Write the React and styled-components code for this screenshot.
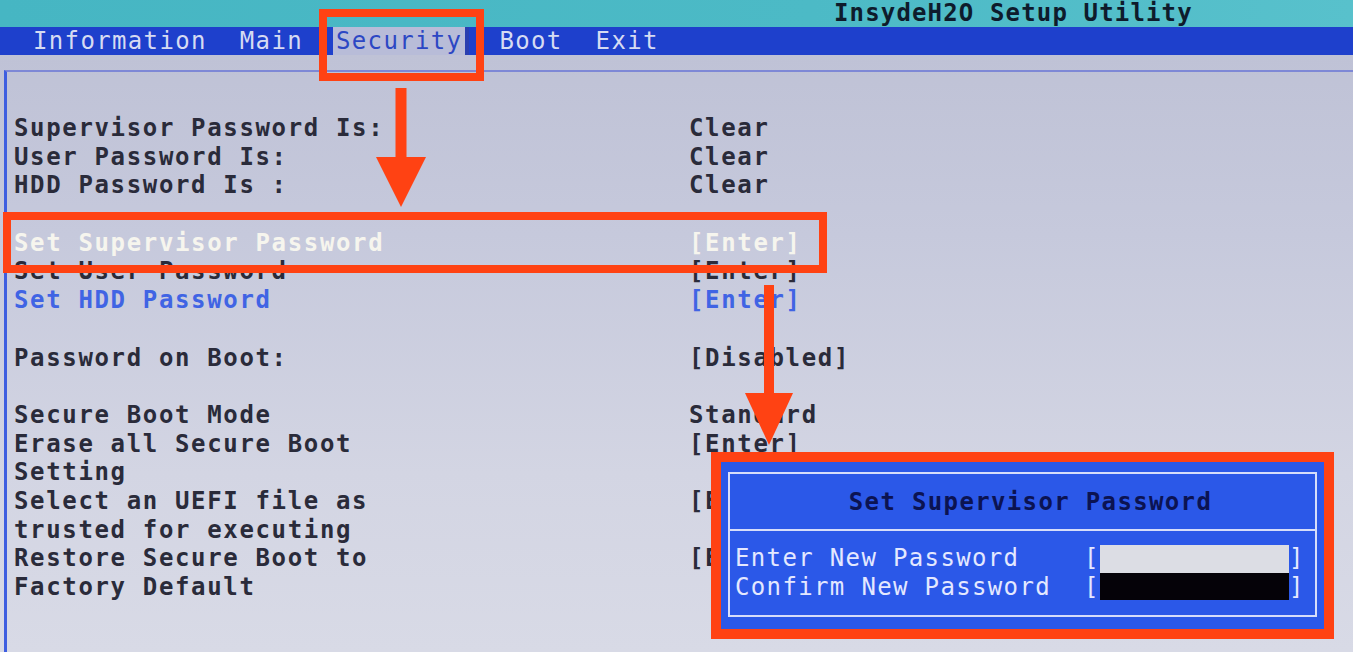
import React from "react";
import styled, { createGlobalStyle } from "styled-components";

const Global = createGlobalStyle`
  html, body { margin: 0; padding: 0; background: #cfd2e2; overflow: hidden; }
  #root { width: 1353px; height: 652px; }
`;

const MONO = `"DejaVu Sans Mono", "Liberation Mono", monospace`;

const Screen = styled.div`
  position: relative;
  width: 1353px;
  height: 652px;
  overflow: hidden;
  display: flex;
  flex-direction: column;
  font-family: ${MONO};
  font-size: 24px;
`;

const TitleBar = styled.header`
  height: 27px;
  flex: none;
  display: flex;
  align-items: center;
  padding-left: 834px;
  background: linear-gradient(90deg, #46b6c3 0%, #4cbac6 60%, #58c1cc 100%);
`;

const Title = styled.h1`
  margin: 0;
  font-size: 24px;
  font-weight: 700;
  letter-spacing: 1.15px;
  color: #0e1b2c;
  line-height: 27px;
`;

const MenuBar = styled.nav`
  height: 28px;
  flex: none;
  display: flex;
  align-items: stretch;
  gap: 27px;
  padding-left: 30px;
  background: #1e40cc;
`;

const Tab = styled.span`
  display: flex;
  align-items: center;
  padding: 0 3px;
  letter-spacing: 1.35px;
  color: ${(p) => (p.$active ? "#2c47c4" : "#d6dbf2")};
  background: ${(p) => (p.$active ? "#b8bcd8" : "transparent")};
  border-right: ${(p) => (p.$active ? "4px solid #2a3fb0" : "none")};
`;

const Body = styled.main`
  flex: 1;
  display: flex;
  flex-direction: column;
  padding-top: 15px;
  background: linear-gradient(180deg, #bfc2d6 0%, #c6c9dc 30%, #d3d5e3 70%, #d8dae6 100%);
`;

const Panel = styled.section`
  flex: 1;
  margin-left: 4px;
  border-top: 2px solid #7e88d6;
  border-left: 3px solid #3e5ee0;
  padding: 42px 0 0 7px;
  display: flex;
  flex-direction: column;
`;

const Row = styled.div`
  display: grid;
  grid-template-columns: 675px 1fr;
  line-height: 28.69px;
  font-weight: 700;
  letter-spacing: 1.65px;
  white-space: pre;
  color: ${(p) =>
    p.$tone === "selected" ? "#f6f5ee" : p.$tone === "link" ? "#4064e4" : "#2a2b3a"};
`;

const Spacer = styled.div`
  height: 28.69px;
`;

const Popup = styled.div`
  position: absolute;
  left: 711px;
  top: 452px;
  width: 623px;
  height: 187px;
  box-sizing: border-box;
  border: 10px solid #ff4213;
  background: #2b58e8;
  padding: 10px 7px 12px 7px;
  display: flex;
  z-index: 2;
`;

const Frame = styled.div`
  flex: 1;
  border: 2px solid #d6ddfa;
  display: flex;
  flex-direction: column;
`;

const PopupTitle = styled.div`
  height: 55px;
  flex: none;
  display: flex;
  align-items: center;
  justify-content: center;
  padding-left: 16px;
  border-bottom: 2px solid #d6ddfa;
  font-weight: 700;
  letter-spacing: 1.35px;
  color: #0b1352;
`;

const Fields = styled.div`
  padding: 13px 0 0 5px;
  display: flex;
  flex-direction: column;
`;

const Field = styled.div`
  display: grid;
  grid-template-columns: 349px 16px 189px 16px;
  align-items: stretch;
  line-height: 28.7px;
  letter-spacing: 1.35px;
  color: #e4e8ff;
`;

const Bracket = styled.span`
  letter-spacing: 0;
  overflow: hidden;
`;

const Input = styled.span`
  background: ${(p) => (p.$dark ? "#050208" : "#dcdde4")};
  margin: ${(p) => (p.$dark ? "0 0 1px 0" : "1px 0 0 0")};
`;

const Mark = styled.div`
  position: absolute;
  left: ${(p) => p.$x}px;
  top: ${(p) => p.$y}px;
  width: ${(p) => p.$w}px;
  height: ${(p) => p.$h}px;
  box-sizing: border-box;
  border: 8px solid #ff4213;
  z-index: 3;
`;

const ArrowSvg = styled.svg`
  position: absolute;
  left: ${(p) => p.$x}px;
  top: ${(p) => p.$y}px;
  z-index: 3;
`;

function Arrow({ x, y, length, head = 50, headW = 50, shaft = 11 }) {
  const cx = headW / 2;
  return (
    <ArrowSvg $x={x} $y={y} width={headW} height={length}>
      <rect x={cx - shaft / 2} y={0} width={shaft} height={length - head + 2} fill="#ff4213" />
      <polygon points={`0,${length - head} ${headW},${length - head} ${cx},${length}`} fill="#ff4213" />
    </ArrowSvg>
  );
}

const rows = [
  { label: "Supervisor Password Is:", value: "Clear" },
  { label: "User Password Is:", value: "Clear" },
  { label: "HDD Password Is :", value: "Clear" },
  null,
  { label: "Set Supervisor Password", value: "[Enter]", tone: "selected" },
  { label: "Set User Password", value: "[Enter]" },
  { label: "Set HDD Password", value: "[Enter]", tone: "link" },
  null,
  { label: "Password on Boot:", value: "[Disabled]" },
  null,
  { label: "Secure Boot Mode", value: "Standard" },
  { label: "Erase all Secure Boot\nSetting", value: "[Enter]" },
  { label: "Select an UEFI file as\ntrusted for executing", value: "[Enter]" },
  { label: "Restore Secure Boot to\nFactory Default", value: "[Enter]" },
];

const tabs = ["Information", "Main", "Security", "Boot", "Exit"];

export default function App() {
  return (
    <>
      <Global />
      <Screen>
        <TitleBar>
          <Title>InsydeH2O Setup Utility</Title>
        </TitleBar>
        <MenuBar>
          {tabs.map((t) => (
            <Tab key={t} $active={t === "Security"}>
              {t}
            </Tab>
          ))}
        </MenuBar>
        <Body>
          <Panel>
            {rows.map((r, i) =>
              r ? (
                <Row key={i} $tone={r.tone}>
                  <span>{r.label}</span>
                  <span>{r.value}</span>
                </Row>
              ) : (
                <Spacer key={i} />
              )
            )}
          </Panel>
        </Body>

        <Popup>
          <Frame>
            <PopupTitle>Set Supervisor Password</PopupTitle>
            <Fields>
              <Field>
                <span>Enter New Password</span>
                <Bracket>[</Bracket>
                <Input />
                <Bracket>]</Bracket>
              </Field>
              <Field>
                <span>Confirm New Password</span>
                <Bracket>[</Bracket>
                <Input $dark />
                <Bracket>]</Bracket>
              </Field>
            </Fields>
          </Frame>
        </Popup>

        <Mark $x={319} $y={9} $w={165} $h={72} />
        <Mark $x={3} $y={212} $w={824} $h={61} />
        <Arrow x={376} y={88} length={119} head={50} headW={50} shaft={11} />
        <Arrow x={745} y={285} length={160} head={52} headW={48} shaft={10} />
      </Screen>
    </>
  );
}
